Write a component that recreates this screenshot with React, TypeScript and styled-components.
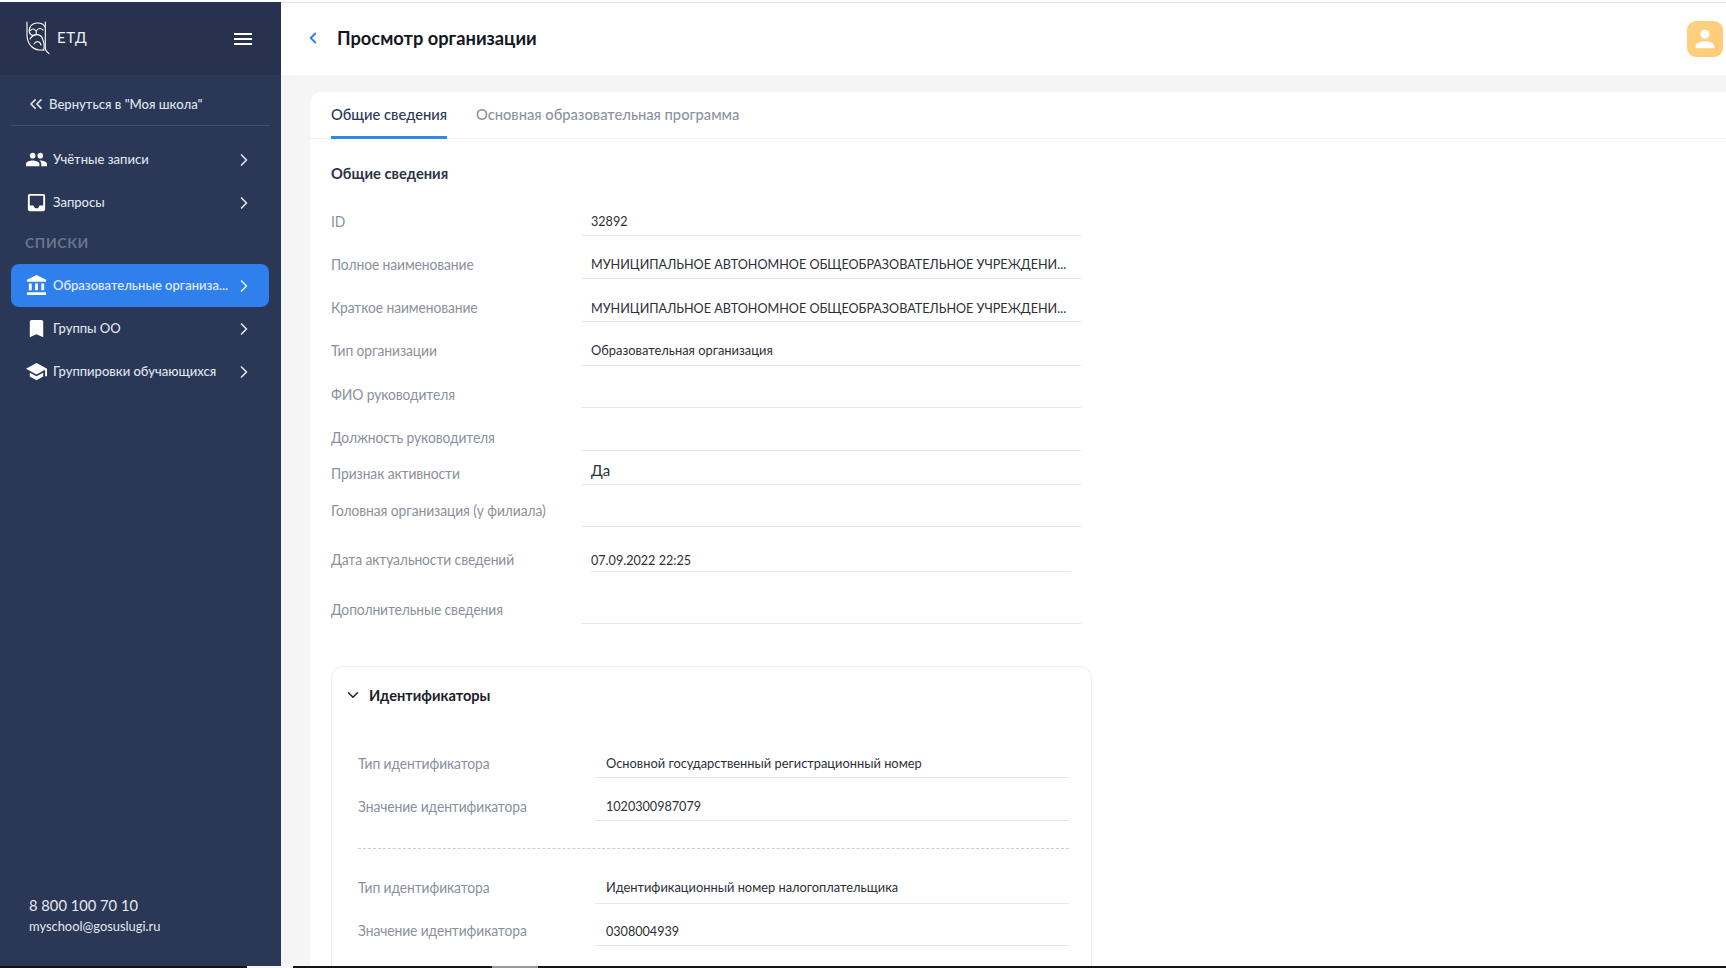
import React from "react";
import styled, { createGlobalStyle } from "styled-components";
import { ChevronRight, ChevronLeft, ChevronDown, ChevronsLeft } from "lucide-react";
import { MdPeople, MdInbox, MdAccountBalance, MdBookmark, MdSchool, MdMenu, MdPerson } from "react-icons/md";

const Global = createGlobalStyle`
  html, body { margin: 0; padding: 0; height: 968px; overflow: hidden; background: #fff; }
  body { font-family: "Lato", "Liberation Sans", sans-serif; }
  * { box-sizing: border-box; }
`;

const Page = styled.div`
  width: 1726px;
  height: 968px;
  display: flex;
  flex-direction: column;
  overflow: hidden;
`;
const TopEdge = styled.div`
  height: 2px;
  flex: none;
  background: #fff;
`;
const Body = styled.div`
  flex: 1;
  min-height: 0;
  display: flex;
`;
const BottomEdge = styled.div`
  height: 2px;
  flex: none;
  background: #141414;
  display: flex;
`;
const EdgeBit = styled.div<{ $left: number; $color: string }>`
  width: 46px;
  margin-left: ${(p) => p.$left}px;
  background: ${(p) => p.$color};
`;
/* the reference text is horizontally condensed */
const Squeeze = styled.span<{ $x: number }>`
  display: inline-block;
  white-space: nowrap;
  transform: scaleX(${(p) => p.$x});
  transform-origin: left center;
`;

const Sidebar = styled.aside`
  width: 281px;
  flex: none;
  background: #2b3757;
  display: flex;
  flex-direction: column;
`;
const Brand = styled.div`
  height: 73px;
  flex: none;
  background: #28324f;
  display: flex;
  align-items: center;
  padding: 0 26px 0 25px;
  color: #fff;
`;
const BrandName = styled.span`
  margin: 0 0 3px 6px;
  font-size: 15px;
  letter-spacing: 0.7px;
  color: #eef0f5;
  flex: 1;
`;
const BackRow = styled.div`
  height: 51px;
  flex: none;
  margin: 0 11px 12px;
  padding: 7px 0 0 15px;
  border-bottom: 1px solid #414d6d;
  display: flex;
  align-items: center;
  gap: 3px;
  color: #dfe3ec;
  font-size: 14px;
  font-weight: 500;
`;
const NavItem = styled.div<{ $active?: boolean }>`
  height: 43px;
  margin: 0 12px 0 11px;
  padding: 0 15px 0 14px;
  display: flex;
  align-items: center;
  border-radius: 8px;
  background: ${(p) => (p.$active ? "#2f80ed" : "transparent")};
  color: ${(p) => (p.$active ? "#e6effc" : "#dfe3ec")};
  font-size: 14px;
  font-weight: 500;
  svg { flex: none; }
`;
const NavIcon = styled.span`
  width: 28px;
  flex: none;
  display: flex;
  align-items: center;
  color: #fff;
`;
const NavText = styled.span`
  flex: 1;
  min-width: 0;
  padding-bottom: 2px;
  white-space: nowrap;
`;
const SectionLabel = styled.div`
  height: 40px;
  padding: 10px 0 0 25px;
  font-size: 14px;
  font-weight: 700;
  letter-spacing: 0.6px;
  color: #69738d;
`;
const Contacts = styled.div`
  margin-top: auto;
  padding: 0 0 30px 29px;
  color: #e4e7ee;
`;
const Phone = styled.div`
  font-size: 16px;
  line-height: 22px;
`;
const Email = styled.div`
  font-size: 14px;
  line-height: 20px;
`;

const Main = styled.main`
  flex: 1;
  min-width: 0;
  display: flex;
  flex-direction: column;
  background: #f5f5f5;
`;
const Header = styled.header`
  height: 73px;
  flex: none;
  background: #fff;
  border-top: 1px solid #e6e6e6;
  display: flex;
  align-items: center;
  padding: 0 3px 3px 23px;
  color: #2f80ed;
`;
const Title = styled.h1`
  margin: 0 0 0 15px;
  flex: 1;
  font-size: 18.3px;
  font-weight: 700;
  color: #14171f;
`;
const Avatar = styled.div`
  width: 36px;
  height: 36px;
  margin-top: 3px;
  border-radius: 9px;
  background: linear-gradient(135deg, #fdd27f, #ffca78);
  color: #fff;
  display: flex;
  align-items: center;
  justify-content: center;
`;
const Card = styled.section`
  flex: 1;
  min-height: 0;
  margin: 17px 0 0 29px;
  background: #fff;
  border-radius: 12px 0 0 0;
  overflow: hidden;
`;
const Tabs = styled.div`
  height: 47px;
  padding-left: 21px;
  display: flex;
  gap: 29px;
  border-bottom: 1px solid #e8f4f3;
`;
const Tab = styled.div<{ $active?: boolean }>`
  height: 47px;
  padding-top: 12px;
  font-size: 14.7px;
  line-height: 20px;
  font-weight: 500;
  color: ${(p) => (p.$active ? "#2b3757" : "#8b93a1")};
  border-bottom: 3px solid ${(p) => (p.$active ? "#2d8ae8" : "transparent")};
`;
const Content = styled.div`
  padding-left: 21px;
`;
const SectionTitle = styled.h2`
  margin: 0;
  height: 54px;
  padding-top: 23px;
  font-size: 14.7px;
  line-height: 22px;
  font-weight: 700;
  color: #2b3345;
`;
const FieldRow = styled.div<{ $height: number; $labelWidth: number }>`
  height: ${(p) => p.$height}px;
  display: grid;
  grid-template-columns: ${(p) => p.$labelWidth}px 1fr;
  align-items: end;
`;
const Label = styled.div<{ $gap: number }>`
  font-size: 14.5px;
  line-height: 20px;
  color: #8a919c;
  letter-spacing: -0.1px;
  padding-bottom: ${(p) => p.$gap}px;
  white-space: nowrap;
`;
const Value = styled.div<{ $gap: number; $big?: boolean; $width: number; $indent: number; $pad: number }>`
  width: ${(p) => p.$width}px;
  margin-left: ${(p) => p.$indent}px;
  height: 100%;
  display: flex;
  align-items: flex-end;
  padding: 0 0 ${(p) => p.$gap}px ${(p) => p.$pad}px;
  border-bottom: 1px solid #e6e8ea;
  font-size: ${(p) => (p.$big ? "15px" : "14px")};
  line-height: 20px;
  color: #2b2f38;
  white-space: nowrap;
`;
const Block = styled.div`
  width: 761px;
  height: 340px;
  margin-top: 42px;
  border: 1px solid #ececec;
  border-radius: 12px;
  padding: 0 22px 0 26px;
`;
const BlockHead = styled.div`
  height: 53px;
  margin: 0 0 0 -14px;
  padding-top: 3px;
  display: flex;
  align-items: center;
  gap: 7px;
  font-size: 14.6px;
  font-weight: 700;
  color: #1c2029;
`;
const Dashed = styled.div`
  margin: 27px 0 12px;
  height: 0;
  border-top: 1px dashed #c9ccd1;
`;
const BlockRows = styled.div`
  padding-top: 15px;
`;

function OwlLogo() {
  return (
    <svg width="26" height="36" viewBox="0 0 26 36" fill="none" stroke="#fff" strokeWidth="1.1" strokeLinecap="round" strokeLinejoin="round">
      <path d="M2 1V14C2 24 9 28.7 14 29H19" />
      <path d="M20.3 1V27Q20.3 29.5 24 32.7" />
      <path d="M4.7 7C6 3.5 10 2 13 2C16 2 19 4 20 6" />
      <path d="M4.7 7C3 12 6 15.5 10 14" />
      <path d="M5.5 9.5Q8 6.5 10.5 9.5" />
      <path d="M12 9Q15 6 18 9" />
      <path d="M11.2 9.5V12.5" />
      <path d="M5 18C9 12 16 12 18 19C19.5 23 19.5 26 18.5 29" />
      <path d="M9 23C11 19.5 15 20 16 24" />
    </svg>
  );
}

type F = { label: string; value?: string; h: number; gap: number; vgap?: number; big?: boolean; width?: number; indent?: number; pad?: number; sx?: number };

const LONG = "МУНИЦИПАЛЬНОЕ АВТОНОМНОЕ ОБЩЕОБРАЗОВАТЕЛЬНОЕ УЧРЕЖДЕНИ...";

const fields: F[] = [
  { label: "ID", value: "32892", h: 43, gap: 4, vgap: 4 },
  { label: "Полное наименование", value: LONG, h: 43, gap: 4, vgap: 4 },
  { label: "Краткое наименование", value: LONG, h: 43, gap: 4, vgap: 3 },
  { label: "Тип организации", value: "Образовательная организация", h: 44, gap: 5, vgap: 5, sx: 0.92 },
  { label: "ФИО руководителя", h: 42, gap: 3 },
  { label: "Должность руководителя", h: 43, gap: 3 },
  { label: "Признак активности", value: "Да", h: 34, gap: 1, vgap: 4, big: true, sx: 1 },
  { label: "Головная организация (у филиала)", h: 42, gap: 6 },
  { label: "Дата актуальности сведений", value: "07.09.2022 22:25", h: 45, gap: 2, vgap: 1, width: 480, indent: 10, pad: 0 },
  { label: "Дополнительные сведения", h: 52, gap: 4 },
];

const idents: F[] = [
  { label: "Тип идентификатора", value: "Основной государственный регистрационный номер", h: 43, gap: 4, vgap: 4, sx: 0.917 },
  { label: "Значение идентификатора", value: "1020300987079", h: 43, gap: 4, vgap: 4 },
];
const idents2: F[] = [
  { label: "Тип идентификатора", value: "Идентификационный номер налогоплательщика", h: 43, gap: 6, vgap: 6, sx: 0.917 },
  { label: "Значение идентификатора", value: "0308004939", h: 42, gap: 5, vgap: 4 },
];

const nav = [
  { icon: <MdPeople size={23} />, text: "Учётные записи" },
  { icon: <MdInbox size={23} />, text: "Запросы" },
];
const nav2 = [
  { icon: <MdAccountBalance size={23} />, text: "Образовательные организа...", active: true },
  { icon: <MdBookmark size={23} />, text: "Группы ОО" },
  { icon: <MdSchool size={23} />, text: "Группировки обучающихся" },
];

function Field({ f, labelWidth, width, pad }: { f: F; labelWidth: number; width: number; pad: number }) {
  return (
    <FieldRow $height={f.h} $labelWidth={labelWidth}>
      <Label $gap={f.gap}>
        <Squeeze $x={0.955}>{f.label}</Squeeze>
      </Label>
      <Value $gap={f.vgap ?? f.gap} $big={f.big} $width={f.width ?? width} $indent={f.indent ?? 0} $pad={f.pad ?? pad}>
        {f.value && <Squeeze $x={f.sx ?? 0.9}>{f.value}</Squeeze>}
      </Value>
    </FieldRow>
  );
}

export default function App() {
  return (
    <Page>
      <Global />
      <TopEdge />
      <Body>
        <Sidebar>
          <Brand>
            <OwlLogo />
            <BrandName>ЕТД</BrandName>
            <MdMenu size={24} />
          </Brand>
          <BackRow>
            <ChevronsLeft size={20} strokeWidth={2} />
            <Squeeze $x={0.935}>Вернуться в "Моя школа"</Squeeze>
          </BackRow>
          {nav.map((n) => (
            <NavItem key={n.text}>
              <NavIcon>{n.icon}</NavIcon>
              <NavText>
                <Squeeze $x={0.93}>{n.text}</Squeeze>
              </NavText>
              <ChevronRight size={20} strokeWidth={2} />
            </NavItem>
          ))}
          <SectionLabel>СПИСКИ</SectionLabel>
          {nav2.map((n) => (
            <NavItem key={n.text} $active={n.active}>
              <NavIcon>{n.icon}</NavIcon>
              <NavText>
                <Squeeze $x={0.93}>{n.text}</Squeeze>
              </NavText>
              <ChevronRight size={20} strokeWidth={2} />
            </NavItem>
          ))}
          <Contacts>
            <Phone>
              <Squeeze $x={0.92}>8 800 100 70 10</Squeeze>
            </Phone>
            <Email>
              <Squeeze $x={0.92}>myschool@gosuslugi.ru</Squeeze>
            </Email>
          </Contacts>
        </Sidebar>
        <Main>
          <Header>
            <ChevronLeft size={18} strokeWidth={2.5} />
            <Title>Просмотр организации</Title>
            <Avatar>
              <MdPerson size={28} />
            </Avatar>
          </Header>
          <Card>
            <Tabs>
              <Tab $active>Общие сведения</Tab>
              <Tab>Основная образовательная программа</Tab>
            </Tabs>
            <Content>
              <SectionTitle>Общие сведения</SectionTitle>
              {fields.map((f) => (
                <Field key={f.label} f={f} labelWidth={250} width={500} pad={10} />
              ))}
              <Block>
                <BlockHead>
                  <ChevronDown size={18} strokeWidth={2} />
                  Идентификаторы
                </BlockHead>
                <BlockRows>
                  {idents.map((f) => (
                    <Field key={f.label} f={f} labelWidth={237} width={474} pad={11} />
                  ))}
                  <Dashed />
                  {idents2.map((f) => (
                    <Field key={f.label} f={f} labelWidth={237} width={474} pad={11} />
                  ))}
                </BlockRows>
              </Block>
            </Content>
          </Card>
        </Main>
      </Body>
      <BottomEdge>
        <EdgeBit $left={247} $color="#f4f4f4" />
        <EdgeBit $left={199} $color="#9a9a9a" />
      </BottomEdge>
    </Page>
  );
}
